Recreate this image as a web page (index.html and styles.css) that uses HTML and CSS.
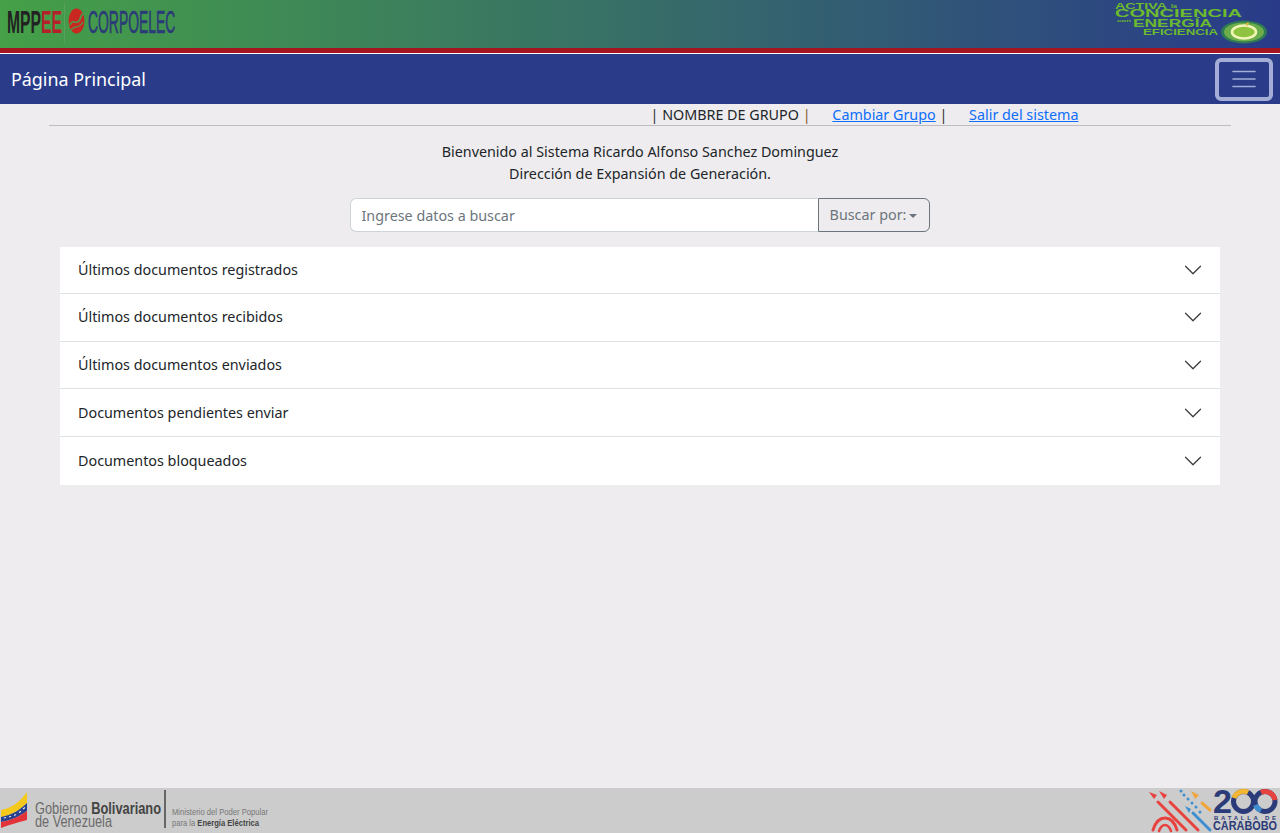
FILE: index.html
```html
<!DOCTYPE html>
<html lang="es">
<head>
<meta charset="UTF-8">
<meta name="viewport" content="width=device-width, initial-scale=1.0">
<title>Página Principal</title>
<link rel="stylesheet" href="styles.css">
</head>
<body>

<!-- Banner -->
<header class="banner">
  <svg class="logo-left" width="190" height="48" viewBox="0 0 190 48">
    <text class="logo-word logo-bold" transform="translate(7 33) scale(.49 1)" fill="#222">MPP<tspan fill="#b5202a">EE</tspan></text>
    <line x1="64.500" y1="3" x2="64.500" y2="43" stroke="#5aa05f" stroke-width="1"/>
    <ellipse cx="76.500" cy="21" rx="8" ry="12.500" fill="#c8281f"/>
    <path d="M70 25 C73 17 77 27 80 19 C81 16 82 14 83 14" fill="none" stroke="#4f9a50" stroke-width="1.800"/>
    <path d="M71 30 C75 24 79 30 83 22" fill="none" stroke="#4f9a50" stroke-width="1.200"/>
    <text class="logo-word logo-thin" transform="translate(88 33) scale(.435 1)" fill="#2b3a78">CORPOELEC</text>
  </svg>
  <svg class="logo-right" width="165" height="48" viewBox="0 0 165 48">
    <g class="slogan" fill="#6cbb2e">
      <text x="0" y="9" font-size="9" textLength="52" lengthAdjust="spacingAndGlyphs">ACTIVA</text>
      <text x="56" y="8" font-size="5" textLength="6" lengthAdjust="spacingAndGlyphs">la</text>
      <text x="0" y="17" font-size="10" textLength="127" lengthAdjust="spacingAndGlyphs">CONCIENCIA</text>
      <text x="2" y="22" font-size="4" textLength="14" lengthAdjust="spacingAndGlyphs">con</text>
      <text x="18" y="27" font-size="10" textLength="79" lengthAdjust="spacingAndGlyphs">ENERGÍA</text>
      <text x="28" y="35" font-size="9" textLength="75" lengthAdjust="spacingAndGlyphs">EFICIENCIA</text>
    </g>
    <ellipse cx="129" cy="32" rx="23" ry="11.500" fill="#2f7a55"/>
    <ellipse cx="129" cy="32" rx="20" ry="9.500" fill="#6aad4a"/>
    <ellipse cx="129" cy="32" rx="12" ry="6.500" fill="#8fc23f" stroke="#f2f5b8" stroke-width="2.500"/>
    <path d="M131 23 l3 -1 -2 5z" fill="#e6b53a"/>
  </svg>
</header>

<!-- Navbar -->
<nav class="navbar">
  <span class="navbar-title">Página Principal</span>
  <button class="navbar-toggle" type="button" aria-label="Menu">
    <svg width="30" height="30" viewBox="0 0 30 30">
      <path d="M4 7.500h22M4 15h22M4 22.500h22" stroke="#a4add5" stroke-width="1.600" stroke-linecap="round"/>
    </svg>
  </button>
</nav>

<main class="container">
  <div class="user-row">
    <span class="sep">|</span> NOMBRE DE GRUPO <span class="sep sep-orange">|</span>
    <a href="#" class="user-link">Cambiar Grupo</a> <span class="sep">|</span>
    <a href="#" class="user-link">Salir del sistema</a>
  </div>

  <div class="welcome">
    <p>Bienvenido al Sistema Ricardo Alfonso Sanchez Dominguez</p>
    <p>Dirección de Expansión de Generación.</p>
  </div>

  <form class="search">
    <input class="search-input" type="text" placeholder="Ingrese datos a buscar">
    <button class="search-btn" type="button">Buscar por:<span class="caret"></span></button>
  </form>

  <!-- Accordion -->
  <div class="accordion">
    <div class="accordion-item">
      <span>Últimos documentos registrados</span>
      <svg class="chevron" viewBox="0 0 16 16"><path fill-rule="evenodd" d="M1.646 4.646a.5.5 0 0 1 .708 0L8 10.293l5.646-5.647a.5.5 0 0 1 .708.708l-6 6a.5.5 0 0 1-.708 0l-6-6a.5.5 0 0 1 0-.708z"/></svg>
    </div>
    <div class="accordion-item">
      <span>Últimos documentos recibidos</span>
      <svg class="chevron" viewBox="0 0 16 16"><path fill-rule="evenodd" d="M1.646 4.646a.5.5 0 0 1 .708 0L8 10.293l5.646-5.647a.5.5 0 0 1 .708.708l-6 6a.5.5 0 0 1-.708 0l-6-6a.5.5 0 0 1 0-.708z"/></svg>
    </div>
    <div class="accordion-item">
      <span>Últimos documentos enviados</span>
      <svg class="chevron" viewBox="0 0 16 16"><path fill-rule="evenodd" d="M1.646 4.646a.5.5 0 0 1 .708 0L8 10.293l5.646-5.647a.5.5 0 0 1 .708.708l-6 6a.5.5 0 0 1-.708 0l-6-6a.5.5 0 0 1 0-.708z"/></svg>
    </div>
    <div class="accordion-item">
      <span>Documentos pendientes enviar</span>
      <svg class="chevron" viewBox="0 0 16 16"><path fill-rule="evenodd" d="M1.646 4.646a.5.5 0 0 1 .708 0L8 10.293l5.646-5.647a.5.5 0 0 1 .708.708l-6 6a.5.5 0 0 1-.708 0l-6-6a.5.5 0 0 1 0-.708z"/></svg>
    </div>
    <div class="accordion-item">
      <span>Documentos bloqueados</span>
      <svg class="chevron" viewBox="0 0 16 16"><path fill-rule="evenodd" d="M1.646 4.646a.5.5 0 0 1 .708 0L8 10.293l5.646-5.647a.5.5 0 0 1 .708.708l-6 6a.5.5 0 0 1-.708 0l-6-6a.5.5 0 0 1 0-.708z"/></svg>
    </div>
  </div>
</main>

<footer class="footer">
  <svg class="gob" width="275" height="45" viewBox="0 0 275 45">
    <path d="M1 22 C12 20 20 14 27 4 L27 15 C20 22 12 27 1 29z" fill="#f4c91c"/>
    <path d="M1 29 C12 27 20 22 27 15 L27 23 C20 28 12 32 1 34z" fill="#27408f"/>
    <path d="M1 34 C12 32 20 28 27 23 L27 32 C20 34 12 36 1 40z" fill="#e2333a"/>
    <path d="M4 30l2-.5M9 29l2-.7M14 27.500l2-1M19 24.500l2-1.200M23 21l2-1.500" stroke="#e8e8e8" stroke-width="1.200"/>
    <text class="gob-name" x="35" y="25.500" textLength="126" lengthAdjust="spacingAndGlyphs">Gobierno <tspan class="gob-bold">Bolivariano</tspan></text>
    <text class="gob-name" x="35" y="39" textLength="77" lengthAdjust="spacingAndGlyphs">de Venezuela</text>
    <line x1="165" y1="2" x2="165" y2="40" stroke="#666" stroke-width="2"/>
    <text class="gob-min" x="172" y="27" textLength="96" lengthAdjust="spacingAndGlyphs">Ministerio del Poder Popular</text>
    <text class="gob-min" x="172" y="38" textLength="87" lengthAdjust="spacingAndGlyphs">para la <tspan class="gob-bold">Energía Eléctrica</tspan></text>
  </svg>
  <svg class="batalla" width="130" height="45" viewBox="0 0 130 45">
    <g fill="none" stroke-linecap="round">
      <path d="M10 14 L38 42 M22 14 L50 42" stroke="#e8423f" stroke-width="3"/>
      <path d="M5 42 C10 26 24 26 29 42" stroke="#e8423f" stroke-width="3"/>
      <path d="M11 43 C14 35 20 35 23 43" stroke="#e8423f" stroke-width="2.500"/>
      <path d="M45 25 L62 42" stroke="#3f8fd0" stroke-width="3"/>
      <path d="M54 15 L62 22" stroke="#f0a63c" stroke-width="3"/>
    </g>
    <path d="M1 4 L9 7 L6 11z M11 3 L19 7 L16 11z" fill="#e8423f"/>
    <path d="M43 3 L51 7 L47 11z" fill="#f0a63c"/>
    <path d="M37 18 L43 21 L41 25z" fill="#3f8fd0"/>
    <g fill="#3f8fd0"><circle cx="33" cy="3" r="1.500"/><circle cx="36" cy="7" r="1.500"/><circle cx="40" cy="11" r="1.500"/><circle cx="44" cy="15" r="1.500"/><circle cx="48" cy="19" r="1.500"/><circle cx="52" cy="24" r="1.500"/></g>
    <text class="batalla-200" x="65" y="25" fill="#2b3a78" textLength="19" lengthAdjust="spacingAndGlyphs">2</text>
    <circle cx="95.500" cy="13.500" r="10" fill="none" stroke="#2b3a78" stroke-width="5"/>
    <path d="M86 10 A10 10 0 0 1 100 4.500" fill="none" stroke="#f2b632" stroke-width="5"/>
    <circle cx="117" cy="13.500" r="10" fill="none" stroke="#2b3a78" stroke-width="5"/>
    <path d="M113 4.500 A10 10 0 0 1 127 12" fill="none" stroke="#e8423f" stroke-width="5"/>
    <path d="M107.500 17 A10 10 0 0 0 113 22.500" fill="none" stroke="#3f8fd0" stroke-width="5"/>
    <text class="batalla-small" x="66" y="32" textLength="62" fill="#2b3a78">BATALLA DE</text>
    <text class="batalla-name" x="65" y="42" textLength="64" lengthAdjust="spacingAndGlyphs" fill="#2b3a78">CARABOBO</text>
  </svg>
</footer>

</body>
</html>
```

FILE: styles.css
```css
html, body { height: 100%; }
body {
  margin: 0;
  display: flex;
  flex-direction: column;
  background: #eeecee;
  color: #212529;
  font-family: "Noto Sans", sans-serif;
  font-size: 14.33px;
  line-height: 22px;
}
svg { overflow: visible; }

/* banner */
.banner {
  height: 48px;
  display: flex;
  justify-content: space-between;
  background: linear-gradient(to right, #45a047, #293b89);
  border-bottom: 5px solid #a3151f;
  box-shadow: 0 1px 0 #fff;
  margin-bottom: 1px;
}
.logo-left, .logo-right { display: block; }
.logo-word { font-family: "Liberation Sans", sans-serif; font-size: 32px; }
.logo-bold { font-weight: 700; }
.logo-thin { stroke: #2b3a78; stroke-width: 0.6px; }
.slogan text { font-family: "Liberation Sans", sans-serif; font-weight: 700; }

/* navbar */
.navbar {
  height: 50px;
  display: flex;
  justify-content: space-between;
  align-items: center;
  padding: 0 7px 0 11px;
  background: #293b89;
}
.navbar-title { color: #fff; font-size: 17.9px; }
.navbar-toggle {
  width: 58px;
  height: 43px;
  display: flex;
  align-items: center;
  justify-content: center;
  padding: 0;
  background: transparent;
  border: 4px solid #a4add5;
  border-radius: 6px;
}

/* content */
.container { flex: 1; padding: 0 49px; }
.user-row {
  height: 21px;
  padding-left: 601.5px;
  border-bottom: 1px solid #bdbdbd;
  white-space: nowrap;
}
.user-link { color: #0d6efd; margin-left: 18px; }
.sep { color: #333; }
.sep-orange { color: #8a5a2b; }

.welcome { margin-top: 15px; text-align: center; }
.welcome p { margin: 0; }

.search { display: flex; justify-content: center; margin-top: 13px; padding-right: 1px; }
.search-input {
  width: 468px;
  height: 34px;
  box-sizing: border-box;
  padding: 0 11px;
  border: 1px solid #ced4da;
  border-right: 0;
  border-radius: 6px 0 0 6px;
  background: #fff;
  font: inherit;
  color: #212529;
  outline: none;
}
.search-input::placeholder { color: #6c757d; opacity: 1; }
.search-btn {
  width: 112px;
  height: 34px;
  padding: 0;
  border: 1px solid #6c757d;
  border-radius: 0 6px 6px 0;
  background: transparent;
  color: #6c757d;
  font: inherit;
}
.caret {
  display: inline-block;
  margin-left: 3px;
  vertical-align: 2px;
  border-top: 4px solid #6c757d;
  border-left: 4px solid transparent;
  border-right: 4px solid transparent;
}

.accordion { margin: 14.6px 11px 0; background: #fff; }
.accordion-item {
  height: 47.6px;
  box-sizing: border-box;
  display: flex;
  justify-content: space-between;
  align-items: center;
  padding: 0 17px 0 18px;
  border-bottom: 1px solid #dee2e6;
}
.accordion-item:last-child { border-bottom: 0; }
.chevron { width: 20px; height: 20px; fill: #3c3f42; }

/* footer */
.footer {
  height: 45px;
  display: flex;
  justify-content: space-between;
  align-items: flex-end;
  background: #cccccc;
}
.gob, .batalla { display: block; }
.gob text { font-family: "Liberation Sans", sans-serif; }
.gob-name { font-size: 16px; fill: #6a6a6a; }
.gob-min { font-size: 9.500px; fill: #777; }
.gob-bold { font-weight: 700; fill: #444; }

.batalla { margin-right: 2px; }
.batalla text { font-family: "Liberation Sans", sans-serif; font-weight: 700; }
.batalla-200 { font-size: 33px; }
.batalla-small { font-size: 6px; }
.batalla-name { font-size: 12px; }
```
